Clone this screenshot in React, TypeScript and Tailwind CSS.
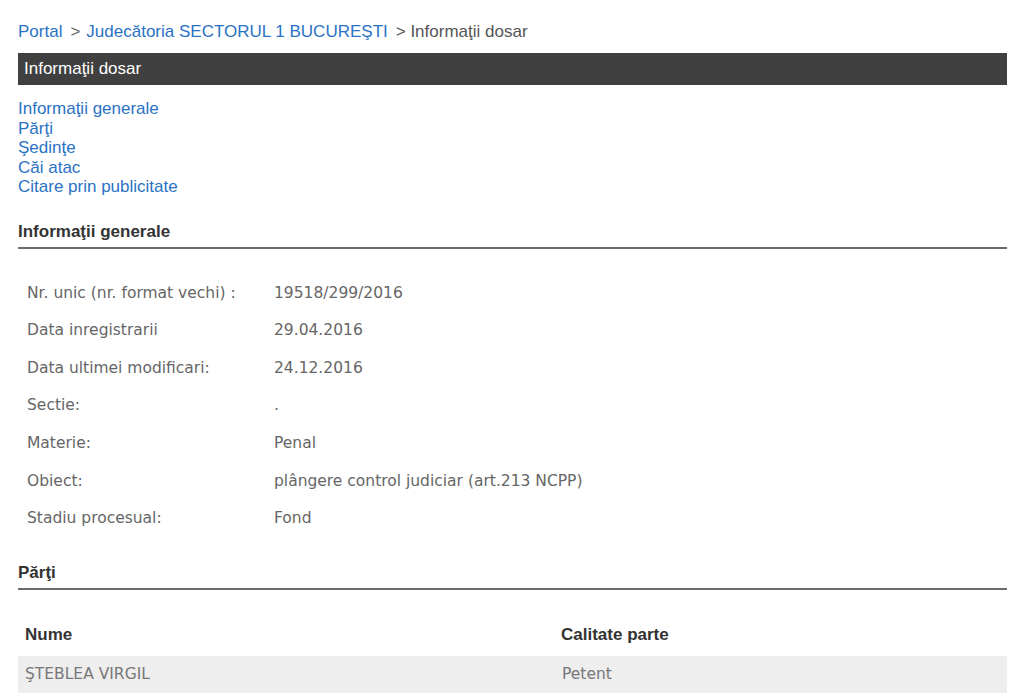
import React from "react";

const arial = { fontFamily: '"Liberation Sans", Arial, sans-serif' };
const tahoma = { fontFamily: '"DejaVu Sans", Tahoma, Verdana, sans-serif' };

const details: [string, string][] = [
  ["Nr. unic (nr. format vechi) :", "19518/299/2016"],
  ["Data inregistrarii", "29.04.2016"],
  ["Data ultimei modificari:", "24.12.2016"],
  ["Sectie:", "."],
  ["Materie:", "Penal"],
  ["Obiect:", "plângere control judiciar (art.213 NCPP)"],
  ["Stadiu procesual:", "Fond"],
];

const anchors = ["Informaţii generale", "Părţi", "Şedinţe", "Căi atac", "Citare prin publicitate"];

function SectionTitle({ children }: { children: React.ReactNode }) {
  return (
    <div
      className="border-b-2 border-[#6b6b6b] pb-[5px] text-[17px] leading-[20px] font-bold text-[#333]"
      style={arial}
    >
      {children}
    </div>
  );
}

export default function App() {
  return (
    <div className="min-h-[700px] bg-white">
      <div className="ml-[18px] w-[989px] pt-[22px]">
        <div className="flex items-center text-[17px] leading-[20px]" style={arial}>
          <a className="text-[#2a72c4]">Portal</a>
          <span className="ml-[8px] text-[#666]">&gt;</span>
          <a className="ml-[6px] text-[#2a72c4]">Judecătoria SECTORUL 1 BUCUREŞTI</a>
          <span className="ml-[8px] text-[#555]">&gt; Informaţii dosar</span>
        </div>

        <div
          className="mt-[11px] flex h-[32px] items-center bg-[#404040] px-[6px] text-[17px] text-white"
          style={arial}
        >
          Informaţii dosar
        </div>

        <div className="mt-[14px] flex flex-col text-[17px] leading-[19.5px]" style={arial}>
          {anchors.map((a) => (
            <a key={a} className="text-[#2a72c4]">
              {a}
            </a>
          ))}
        </div>

        <div className="mt-[25px]">
          <SectionTitle>Informaţii generale</SectionTitle>
        </div>

        <div className="mt-[26px] text-[15.5px] text-[#666]" style={tahoma}>
          {details.map(([k, v]) => (
            <div key={k} className="grid h-[37.6px] grid-cols-[247px_1fr] items-center">
              <div className="pl-[9px]">{k}</div>
              <div className="pl-[9px]">{v}</div>
            </div>
          ))}
        </div>

        <div className="mt-[25px]">
          <SectionTitle>Părţi</SectionTitle>
        </div>

        <div className="mt-[26px]">
          <div
            className="grid h-[38px] grid-cols-[536px_1fr] items-center text-[17px] font-bold text-[#333]"
            style={arial}
          >
            <div className="pl-[7px]">Nume</div>
            <div className="pl-[7px]">Calitate parte</div>
          </div>
          <div
            className="mt-[2px] grid h-[37px] grid-cols-[536px_1fr] items-center bg-[#eeeeee] text-[15.5px] text-[#777]"
            style={tahoma}
          >
            <div className="pl-[7px]">ŞTEBLEA VIRGIL</div>
            <div className="pl-[8px]">Petent</div>
          </div>
        </div>
      </div>
    </div>
  );
}
